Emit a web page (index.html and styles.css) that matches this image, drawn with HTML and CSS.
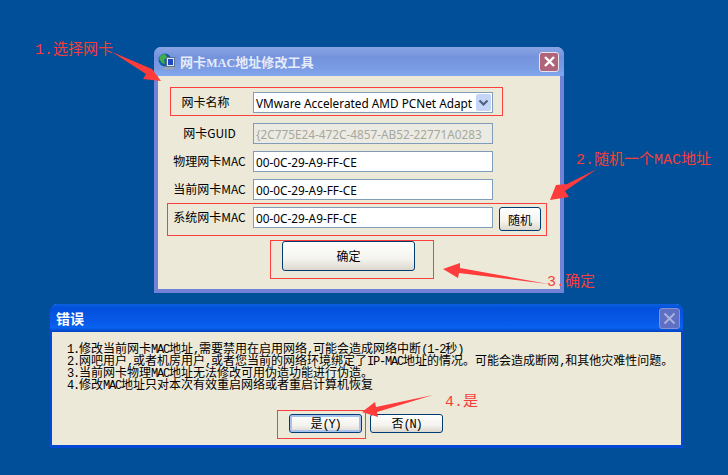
FILE: index.html
```html
<!DOCTYPE html>
<html lang="zh-CN">

<head>
  <meta charset="UTF-8" />
  <title>网卡MAC地址修改工具</title>
  <link rel="stylesheet" href="styles.css">
</head>

<body>
  <!-- 修改工具窗口 -->
  <section class="window tool-window">
    <header class="titlebar">
      <svg class="app-icon" width="18" height="18" viewBox="0 0 18 18">
        <circle cx="7" cy="7" r="6.5" fill="#14609f" />
        <path d="M3 2 L7 1 L9 4 L6 7 L7 11 L4 10 L1 6 Z" fill="#43ad4a" />
        <rect x="8.500" y="4.500" width="8" height="9" fill="#e4eaf5" stroke="#5a7394" />
        <rect x="10" y="6" width="5" height="6" fill="#1f49c4" />
        <path d="M7 14 L17 14 L15 16.500 L5 16.500 Z" fill="#9aa6b6" />
      </svg>
      <h1 class="title">网卡<span class="lat-title">MAC</span>地址修改工具</h1>
      <div class="close close-active">
        <svg width="13" height="13" viewBox="0 0 13 13"><path d="M2 2 L11 11 M11 2 L2 11" stroke="#fff" stroke-width="2.400" /></svg>
      </div>
    </header>
    <div class="tool-body">
      <div class="row row-first">
        <span class="label">网卡名称</span>
        <div class="field">
          <span>VMware Accelerated AMD PCNet Adapt</span>
          <div class="drop">
            <svg width="11" height="8" viewBox="0 0 11 8"><path d="M1.500 1.500 L5.500 5.500 L9.500 1.500" fill="none" stroke="#4d6185" stroke-width="2.200" /></svg>
          </div>
        </div>
      </div>
      <div class="row">
        <span class="label">网卡GUID</span>
        <div class="field field-off">{2C775E24-472C-4857-AB52-22771A0283</div>
      </div>
      <div class="row">
        <span class="label">物理网卡MAC</span>
        <div class="field">00-0C-29-A9-FF-CE</div>
      </div>
      <div class="row">
        <span class="label">当前网卡MAC</span>
        <div class="field">00-0C-29-A9-FF-CE</div>
      </div>
      <div class="row">
        <span class="label">系统网卡MAC</span>
        <div class="field">00-0C-29-A9-FF-CE</div>
        <button class="btn btn-random">随机</button>
      </div>
      <button class="btn btn-ok">确定</button>
    </div>
  </section>

  <!-- 错误提示窗口 -->
  <section class="window error-window">
    <header class="titlebar">
      <h1 class="title">错误</h1>
      <div class="close close-off">
        <svg width="13" height="13" viewBox="0 0 13 13"><path d="M1.500 1.500 L11.500 11.500 M11.500 1.500 L1.500 11.500" stroke="#a9b1dc" stroke-width="2" /></svg>
      </div>
    </header>
    <div class="error-body">
      <div class="msg">
        <p><span class="lat">1.</span>修改当前网卡<span class="lat">MAC</span>地址<span class="lat">,</span>需要禁用在启用网络<span class="lat">,</span>可能会造成网络中断<span class="lat">(1-2</span>秒<span class="lat">)</span></p>
        <p><span class="lat">2.</span>网吧用户<span class="lat">,</span>或者机房用户<span class="lat">,</span>或者您当前的网络环境绑定了<span class="lat">IP-MAC</span>地址的情况。可能会造成断网<span class="lat">,</span>和其他灾难性问题。</p>
        <p><span class="lat">3.</span>当前网卡物理<span class="lat">MAC</span>地址无法修改可用伪造功能进行伪造。</p>
        <p><span class="lat">4.</span>修改<span class="lat">MAC</span>地址只对本次有效重启网络或者重启计算机恢复</p>
      </div>
      <div class="actions">
        <button class="btn btn-dlg btn-focus">是<span class="lat">(Y)</span></button>
        <button class="btn btn-dlg">否<span class="lat">(N)</span></button>
      </div>
    </div>
  </section>

  <!-- 红色标注 -->
  <div class="mark mark-name"></div>
  <div class="mark mark-sys"></div>
  <div class="mark mark-ok"></div>
  <div class="mark mark-yes"></div>

  <svg class="arrows" width="728" height="475" viewBox="0 0 728 475">
    <polygon points="112,52 152,69 161,81 143,79 146,74" />
    <polygon points="597,169 567,184 556,185 550,200 569,197 565,191" />
    <polygon points="548,284 460,268 460,263 443,269 458,278 459,273" />
    <polygon points="433,395 376,407 375,402 362,412 378,417 377,412" />
  </svg>

  <span class="note note-1"><span class="lat-note">1.</span>选择网卡</span>
  <span class="note note-2"><span class="lat-note">2.</span>随机一个<span class="lat-note">MAC</span>地址</span>
  <span class="note note-3"><span class="lat-note">3.</span>确定</span>
  <span class="note note-4"><span class="lat-note">4.</span>是</span>
</body>

</html>
```

FILE: styles.css
```css
html,
body {
  margin: 0;
  height: 100%;
}

body {
  position: relative;
  width: 728px;
  height: 475px;
  overflow: hidden;
  background: #004f98;
  font-family: "Noto Sans CJK SC", sans-serif;
  font-size: 12px;
  color: #000;
}

.window {
  position: absolute;
  box-sizing: border-box;
  display: flex;
  flex-direction: column;
  background: #ece9d8;
  border-radius: 7px 7px 0 0;
}

.tool-window {
  left: 154px;
  top: 47px;
  width: 410px;
  height: 246px;
  border: 4px solid #7382d6;
  border-top: 0;
}

.error-window {
  left: 50px;
  top: 304px;
  width: 633px;
  height: 144px;
  border: 2px solid #0349d3;
  border-bottom-width: 3px;
  border-top: 0;
}

.titlebar {
  display: flex;
  align-items: center;
  flex: none;
  margin: 0 -4px;
  border-radius: 7px 7px 0 0;
}

.tool-window .titlebar {
  height: 29px;
  padding: 0 5px 0 4px;
  background: linear-gradient(#8aa5e3, #7593dd 35%, #7a9ce4 75%, #84a8ee);
}

.error-window .titlebar {
  height: 28px;
  margin: 0 -2px;
  padding: 0 3px 0 6px;
  background: linear-gradient(#0a5fe0, #0350dc 15%, #0858e8 60%, #0a62f0 85%, #0340c0);
}

.app-icon {
  margin-right: 4px;
}

.title {
  flex: 1;
  margin: 0;
  font-size: 13px;
  font-weight: bold;
  color: #e6ecfa;
  letter-spacing: 0.100px;
}

.lat-title {
  font-family: "Liberation Serif", serif;
  font-size: 12px;
}

.error-window .title {
  font-size: 14px;
  color: #fff;
}

.close {
  display: flex;
  align-items: center;
  justify-content: center;
  box-sizing: border-box;
  border: 1px solid #e8e4ee;
  border-radius: 3px;
}

.close-active {
  width: 20px;
  height: 20px;
  background: #b0647a;
}

.close-off {
  width: 21px;
  height: 21px;
  background: #5f6fc4;
  border-color: #8791cf;
}

.tool-body {
  display: flex;
  flex-direction: column;
  padding: 16px 0 0 14px;
}

.row {
  display: flex;
  align-items: flex-start;
  margin-bottom: 7px;
}

.row-first {
  margin-bottom: 10px;
}

.label {
  width: 75px;
  margin-right: 6px;
  line-height: 19px;
  text-align: center;
  white-space: nowrap;
}

.row-first .label {
  box-sizing: border-box;
  padding-right: 8px;
}

.field {
  display: flex;
  align-items: center;
  justify-content: space-between;
  box-sizing: border-box;
  width: 240px;
  height: 21px;
  padding: 0 1px 0 2px;
  background: #fff;
  border: 1px solid #7f9db9;
  font-family: "Noto Sans", sans-serif;
  font-size: 11.800px;
  white-space: nowrap;
  overflow: hidden;
}

.field-off {
  background: #ebebe4;
  color: #a8a79c;
}

.drop {
  display: flex;
  align-items: center;
  justify-content: center;
  flex: none;
  width: 15px;
  height: 17px;
  background: #c5d5f8;
  border-radius: 2px;
}

.btn {
  box-sizing: border-box;
  padding: 0;
  background: linear-gradient(#fff, #f4f3ee 60%, #dcd8ce);
  border: 1px solid #003c74;
  border-radius: 3px;
  font-family: inherit;
  font-size: 12px;
  color: #000;
}

.btn-random {
  width: 42px;
  height: 24px;
  margin-left: 6px;
}

.btn-ok {
  width: 133px;
  height: 30px;
  margin: 3px 0 0 110px;
  padding-bottom: 2px;
}

.error-body {
  display: flex;
  flex-direction: column;
  padding: 10px 0 0 15px;
}

.msg p {
  margin: 0;
  height: 12px;
  line-height: 12px;
  white-space: nowrap;
}

.lat {
  font-family: "Liberation Mono", monospace;
  font-size: 12px;
  letter-spacing: -1.200px;
}

.actions {
  display: flex;
  gap: 8px;
  margin: 24px 0 0 222px;
}

.btn-dlg {
  width: 73px;
  height: 19px;
  line-height: 15px;
}

.btn-focus {
  box-shadow: inset 0 0 0 2px #a9c2ec;
}

.mark {
  position: absolute;
  box-sizing: border-box;
  border: 1px solid #fb3f3c;
}

.mark-name {
  left: 170px;
  top: 87px;
  width: 333px;
  height: 29px;
}

.mark-sys {
  left: 167px;
  top: 203px;
  width: 380px;
  height: 33px;
}

.mark-ok {
  left: 270px;
  top: 240px;
  width: 164px;
  height: 39px;
}

.mark-yes {
  left: 277px;
  top: 410px;
  width: 89px;
  height: 29px;
}

.arrows {
  position: absolute;
  left: 0;
  top: 0;
  fill: #ff3b3b;
}

.note {
  position: absolute;
  color: #f73d3a;
  font-size: 15px;
  line-height: 18px;
  white-space: nowrap;
}

.lat-note {
  font-family: "Liberation Mono", monospace;
}

.note-1 {
  left: 35px;
  top: 39px;
}

.note-2 {
  left: 576px;
  top: 149px;
}

.note-3 {
  left: 547px;
  top: 271px;
}

.note-4 {
  left: 445px;
  top: 391px;
}
```
